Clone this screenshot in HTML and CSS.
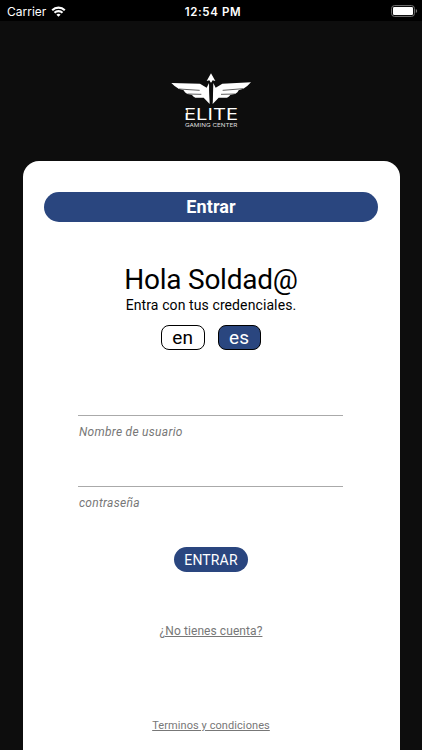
FILE: index.html
```html
<!DOCTYPE html>
<html lang="es">
<head>
<meta charset="utf-8">
<title>Elite Gaming Center</title>
<link rel="stylesheet" href="styles.css">
</head>
<body>
<header class="status">
  <div class="carrier"><span>Carrier</span>
    <svg class="wifi" width="15" height="11" viewBox="0 0 14 11" fill="none" stroke="#fff" stroke-width="2.1"><path d="M.7 4.2a9 9 0 0 1 12.6 0M3 6.8a5.7 5.7 0 0 1 8 0"/><path d="M7 10.8 4.9 8.7a3 3 0 0 1 4.2 0z" fill="#fff" stroke="none"/></svg>
  </div>
  <time class="clock">12:54 PM</time>
  <svg class="battery" width="27" height="12" viewBox="0 0 27 12"><rect x=".6" y=".6" width="22.8" height="10.8" rx="2.8" fill="none" stroke="#777"/><rect x="2" y="2" width="20" height="8" rx="1.3" fill="#fff"/><path d="M24.8 4v4c1.8-.7 1.8-3.3 0-4z" fill="#777"/></svg>
</header>
<div class="brand">
  <svg width="100" height="70" viewBox="0 0 300 210" fill="#fff">
    <path d="M34 54 120 56 140 68 147 54 149 117 131 98 106 98Q99 95 96 90L82 87Q73 82 71 76L57 72Q44 65 34 54Z"/>
    <path d="M273 52 187 56 167 68 160 54 158 117 176 98 201 98Q208 95 211 90L225 87Q234 82 236 76L250 71Q263 64 273 52Z"/>
    <path d="M57 72 119 76M82 87 124 88M250 71 188 76M225 87 183 88" fill="none" stroke="#0d0d0d" stroke-width="2"/>
    <path d="M153 25 166 48 158 46 153 54 148 46 140 48Z"/>
    <path d="M150 53 148 76 150 109 153 118 157 109 159 76 157 53Z" fill="#0d0d0d"/>
    <text class="logo-name" x="72" y="164" textLength="162" lengthAdjust="spacingAndGlyphs">ELITE</text>
    <path d="M73 135h7v9h-7z" fill="#0d0d0d"/>
    <text class="logo-sub" x="75" y="185" textLength="157" lengthAdjust="spacingAndGlyphs">GAMING CENTER</text>
  </svg>
</div>
<main class="card">
  <div class="tab">Entrar</div>
  <h1>Hola Soldad@</h1>
  <p class="intro">Entra con tus credenciales.</p>
  <div class="languages"><button>en</button><button class="selected">es</button></div>
  <form>
    <div class="field"><input id="user" type="text"><label for="user">Nombre de usuario</label></div>
    <div class="field"><input id="password" type="password"><label for="password">contraseña</label></div>
    <button class="submit" type="button">ENTRAR</button>
  </form>
  <a class="register">¿No tienes cuenta?</a>
  <a class="terms">Terminos y condiciones</a>
</main>
</body>
</html>
```
FILE: styles.css
```css
* { box-sizing: border-box; }
body { margin: 0; height: 750px; overflow: hidden; background: #0d0d0d; font-family: Roboto, sans-serif; display: flex; flex-direction: column; }
button { font-family: inherit; padding: 0; }
.status { height: 21px; flex: none; background: #000; color: #fff; display: grid; grid-template-columns: 1fr auto 1fr; align-items: center; padding: 0 4px 0 7px; font: 12px/21px Inter, sans-serif; }
.carrier { display: flex; align-items: center; gap: 5px; letter-spacing: 0; }
.carrier svg { margin-top: -1px; }
.clock { font-weight: 600; font-size: 11.5px; letter-spacing: .6px; padding-top: 2px; margin-right: -1px; }
.battery { justify-self: end; margin-top: -1px; }
.brand { flex: none; height: 140px; padding: 44px 0 0 160px; }
.brand svg { display: block; }
.logo-name { font: 400 46px Inter, sans-serif; }
.logo-sub { font: 400 15px Inter, sans-serif; fill: #ddd; }
.card { width: 377px; flex: 1; margin-left: 22.5px; padding: 30.5px 21.5px 0; background: #fff; border-radius: 16px 16px 0 0; display: flex; flex-direction: column; align-items: center; }
.tab { align-self: stretch; height: 30.5px; flex: none; border-radius: 16px; background: #2a467f; color: #fff; font-weight: 700; font-size: 18px; line-height: 30px; letter-spacing: .1px; text-align: center; }
h1 { margin: 41px 0 0; font-size: 28px; line-height: 33px; font-weight: 400; letter-spacing: -.25px; }
.intro { margin: 0; font-size: 14px; line-height: 18px; letter-spacing: .1px; }
.languages { display: flex; gap: 13px; margin-top: 11px; }
.languages button { width: 43.5px; height: 25px; border: 1px solid #000; border-radius: 8px; background: #fff; color: #000; font-size: 19px; line-height: 22px; letter-spacing: .2px; }
.languages .selected { background: #2a467f; color: #fff; }
form { display: flex; flex-direction: column; align-items: center; margin-top: 36px; }
.field { width: 265px; height: 71px; margin-right: 1px; }
.field input { display: block; width: 100%; height: 30px; border: 0; border-bottom: 1px solid #aaa; padding: 0; outline: 0; background: none; }
.field label { display: block; margin: 8px 0 0 1px; color: #777; font-size: 12px; line-height: 16px; font-style: italic; letter-spacing: .28px; }
.submit { width: 74px; height: 25px; margin-top: 19px; border: 0; border-radius: 13px; background: #2a467f; color: #fff; font-size: 14px; letter-spacing: .15px; }
.register, .terms { color: #777; text-decoration: underline; text-underline-offset: 1px; text-decoration-thickness: 1px; }
.register { margin-top: 51px; font-size: 12px; line-height: 16px; letter-spacing: .08px; }
.terms { margin-top: 80px; font-size: 11px; line-height: 14px; letter-spacing: .08px; }
```
